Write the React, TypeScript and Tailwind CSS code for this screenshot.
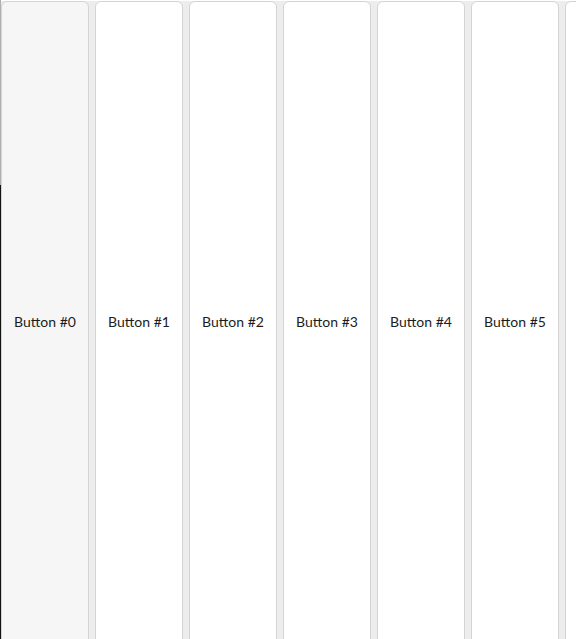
import React from 'react';

const BUTTONS = [0, 1, 2, 3, 4, 5];

export default function App() {
    return (
        <div className="relative h-[639px] w-[576px] overflow-hidden bg-white">
            {/* left edge strip */}
            <div className="absolute left-0 top-0 h-[185px] w-px bg-[#b0b0b0]" />
            <div className="absolute left-0 top-[185px] h-[454px] w-px bg-[#111]" />

            <div className="mt-px flex gap-[6px] bg-[#ededed] pl-px">
                {BUTTONS.map((n) => (
                    <button
                        key={n}
                        className={`flex h-[640px] w-[88px] shrink-0 items-center justify-center rounded-t-[6px] border border-[#d4d4d4] text-[14px] text-[#1c1c1c] ${
                            n === 0 ? 'bg-[#f6f6f6]' : 'bg-white'
                        }`}
                        style={{ fontFamily: 'Lato, "Liberation Sans", sans-serif' }}
                    >
                        Button #{n}
                    </button>
                ))}
                {/* next button, cut off by the window edge */}
                <div className="h-[640px] w-[88px] shrink-0 rounded-t-[6px] border border-[#d4d4d4] bg-white" />
            </div>
        </div>
    );
}
